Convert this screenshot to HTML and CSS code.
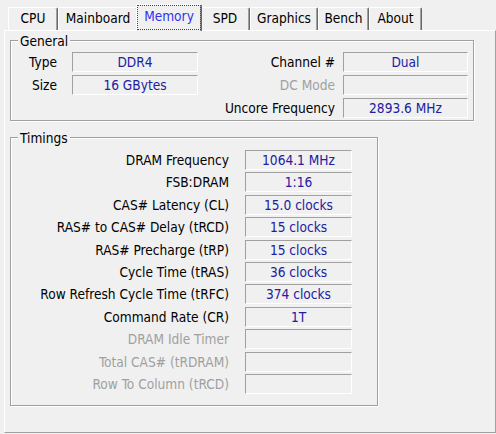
FILE: index.html
```html
<!DOCTYPE html>
<html>
<head>
<meta charset="utf-8">
<link rel="stylesheet" href="styles.css">
</head>
<body>
<div class="tabs">
  <div class="tab tab-cpu">CPU</div>
  <div class="tab tab-mainboard">Mainboard</div>
  <div class="tab tab-memory selected"><span class="tab-label">Memory</span></div>
  <div class="tab tab-spd">SPD</div>
  <div class="tab tab-graphics">Graphics</div>
  <div class="tab tab-bench">Bench</div>
  <div class="tab tab-about">About</div>
</div>
<div class="panel">
  <div class="group general">
    <span class="group-title">General</span>
    <div class="general-body">
      <div class="grid grid-left">
        <span class="label">Type</span><span class="val">DDR4</span>
        <span class="label">Size</span><span class="val">16 GBytes</span>
      </div>
      <div class="grid grid-right">
        <span class="label">Channel #</span><span class="val">Dual</span>
        <span class="label disabled">DC Mode</span><span class="val"></span>
        <span class="label">Uncore Frequency</span><span class="val">2893.6 MHz</span>
      </div>
    </div>
  </div>
  <div class="group timings">
    <span class="group-title">Timings</span>
    <div class="grid grid-timings">
      <span class="label">DRAM Frequency</span><span class="val">1064.1 MHz</span>
      <span class="label">FSB:DRAM</span><span class="val">1:16</span>
      <span class="label">CAS# Latency (CL)</span><span class="val">15.0 clocks</span>
      <span class="label">RAS# to CAS# Delay (tRCD)</span><span class="val">15 clocks</span>
      <span class="label">RAS# Precharge (tRP)</span><span class="val">15 clocks</span>
      <span class="label">Cycle Time (tRAS)</span><span class="val">36 clocks</span>
      <span class="label">Row Refresh Cycle Time (tRFC)</span><span class="val">374 clocks</span>
      <span class="label">Command Rate (CR)</span><span class="val">1T</span>
      <span class="label disabled">DRAM Idle Timer</span><span class="val"></span>
      <span class="label disabled">Total CAS# (tRDRAM)</span><span class="val"></span>
      <span class="label disabled">Row To Column (tRCD)</span><span class="val"></span>
    </div>
  </div>
</div>
</body>
</html>
```
FILE: styles.css
```css
html, body {
  margin: 0;
  padding: 0;
}
body {
  width: 496px;
  height: 434px;
  overflow: hidden;
  background: #f0f0f0;
  font-family: "DejaVu Sans Condensed", "DejaVu Sans", sans-serif;
  font-stretch: condensed;
  font-size: 13.6px;
  color: #000;
}
.tabs {
  display: flex;
  align-items: flex-end;
  height: 30px;
  padding-left: 8px;
  box-sizing: border-box;
}
.tab {
  height: 23px;
  box-sizing: border-box;
  border-top: 1px solid #fff;
  border-left: 1px solid #fff;
  border-right: 1px solid #696969;
  box-shadow: inset -1px 0 0 #a0a0a0;
  border-top-left-radius: 2px;
  border-top-right-radius: 2px;
  text-align: center;
  line-height: 21px;
  background: #f0f0f0;
}
.tab-cpu { width: 50px; }
.tab-mainboard { width: 80px; }
.tab-spd { width: 50px; }
.tab-graphics { width: 68px; }
.tab-bench { width: 51px; }
.tab-about { width: 53px; }
.tab.selected {
  position: relative;
  z-index: 1;
  width: 66px;
  height: 27px;
  margin: 0 -2px -1px -2px;
  line-height: 23px;
  color: #3030f0;
  outline: 1px dotted #444;
  outline-offset: -2px;
}
.panel {
  width: 492px;
  height: 403px;
  margin-left: 4px;
  box-sizing: border-box;
  border-top: 1px solid #fff;
  border-left: 1px solid #fff;
  border-right: 1px solid #a0a0a0;
  border-bottom: 1px solid #a0a0a0;
  padding: 9px 0 0 5px;
}
.group {
  position: relative;
  box-sizing: border-box;
  border: 1px solid #a0a0a0;
  box-shadow: 1px 1px 0 #fff, inset 1px 1px 0 #fff;
}
.group-title {
  position: absolute;
  top: -7px;
  left: 7px;
  padding: 0 2px;
  line-height: 14px;
  background: #f0f0f0;
}
.general {
  width: 464px;
  height: 81px;
}
.general-body {
  display: flex;
  justify-content: space-between;
  padding: 11px 5px 0 0;
}
.grid {
  display: grid;
  grid-auto-rows: 20px;
  row-gap: 3px;
  align-items: center;
}
.grid-left {
  grid-template-columns: 46px 126px;
  column-gap: 15px;
}
.grid-right {
  grid-template-columns: auto 125px;
  column-gap: 8px;
}
.timings {
  width: 368px;
  height: 269px;
  margin-top: 16px;
}
.grid-timings {
  padding-top: 12px;
  grid-template-columns: 218px 107px;
  column-gap: 16px;
  row-gap: 2.4px;
}
.label {
  text-align: right;
  white-space: nowrap;
  line-height: 20px;
}
.label.disabled {
  color: #a0a0a0;
}
.val {
  height: 20px;
  box-sizing: border-box;
  border-top: 1px solid #a0a0a0;
  border-left: 1px solid #a0a0a0;
  border-right: 1px solid #fff;
  border-bottom: 1px solid #fff;
  text-align: center;
  line-height: 19px;
  color: #2020a0;
  white-space: nowrap;
}
```
